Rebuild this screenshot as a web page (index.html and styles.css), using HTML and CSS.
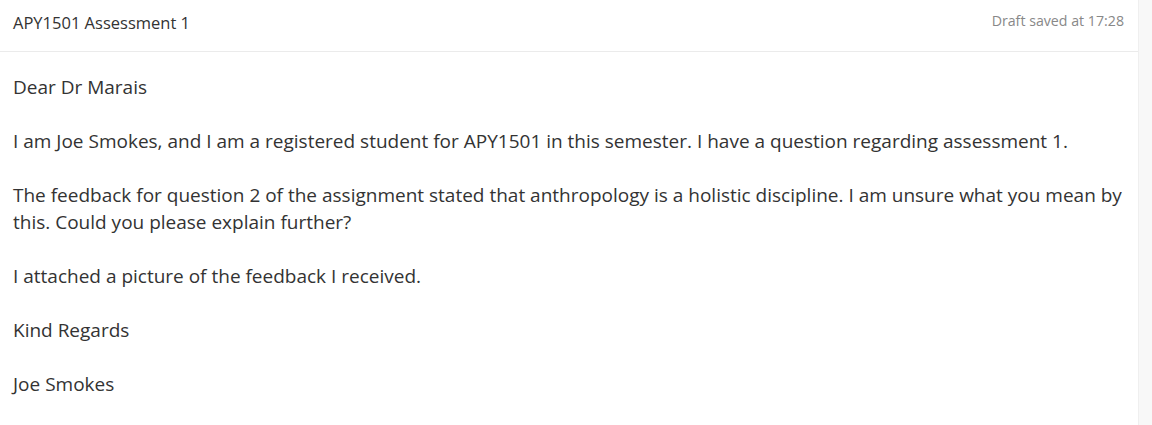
FILE: index.html
```html
<!DOCTYPE html>
<html>
<head>
<meta charset="utf-8">
<link rel="stylesheet" href="styles.css">
</head>
<body>
<div class="page">
  <div class="main">
    <div class="header">
      <div class="title">APY1501 Assessment 1</div>
      <div class="status">Draft saved at 17:28</div>
    </div>
    <div class="body">
      <p>Dear Dr Marais</p>
      <p>I am Joe Smokes, and I am a registered student for APY1501 in this semester. I have a question regarding assessment 1.</p>
      <p>The feedback for question 2 of the assignment stated that anthropology is a holistic discipline. I am unsure what you mean by this. Could you please explain further?</p>
      <p>I attached a picture of the feedback I received.</p>
      <p>Kind Regards</p>
      <p>Joe Smokes</p>
    </div>
  </div>
  <div class="side"></div>
</div>
</body>
</html>
```
FILE: styles.css
```css
html, body {
  margin: 0;
  padding: 0;
  background: #ffffff;
}
.page {
  display: flex;
  width: 1152px;
  height: 425px;
  overflow: hidden;
  font-family: "Open Sans", "Noto Sans", sans-serif;
  color: #333333;
}
.main {
  flex: 1;
  display: flex;
  flex-direction: column;
}
.side {
  width: 13px;
  background: #f8f8f8;
  border-left: 1px solid #efefef;
}
.header {
  height: 51px;
  border-bottom: 1px solid #ebebeb;
  display: flex;
  align-items: center;
  justify-content: space-between;
  padding: 0 14px 0 13px;
}
.title {
  font-size: 16.5px;
  color: #333;
  margin-top: -7px;
}
.status {
  font-size: 14.2px;
  color: #888;
  margin-top: -10px;
}
.body {
  padding: 22px 8px 0 13px;
  font-size: 19px;
  line-height: 27px;
}
.body p {
  margin: 0 0 27px 0;
}
```
